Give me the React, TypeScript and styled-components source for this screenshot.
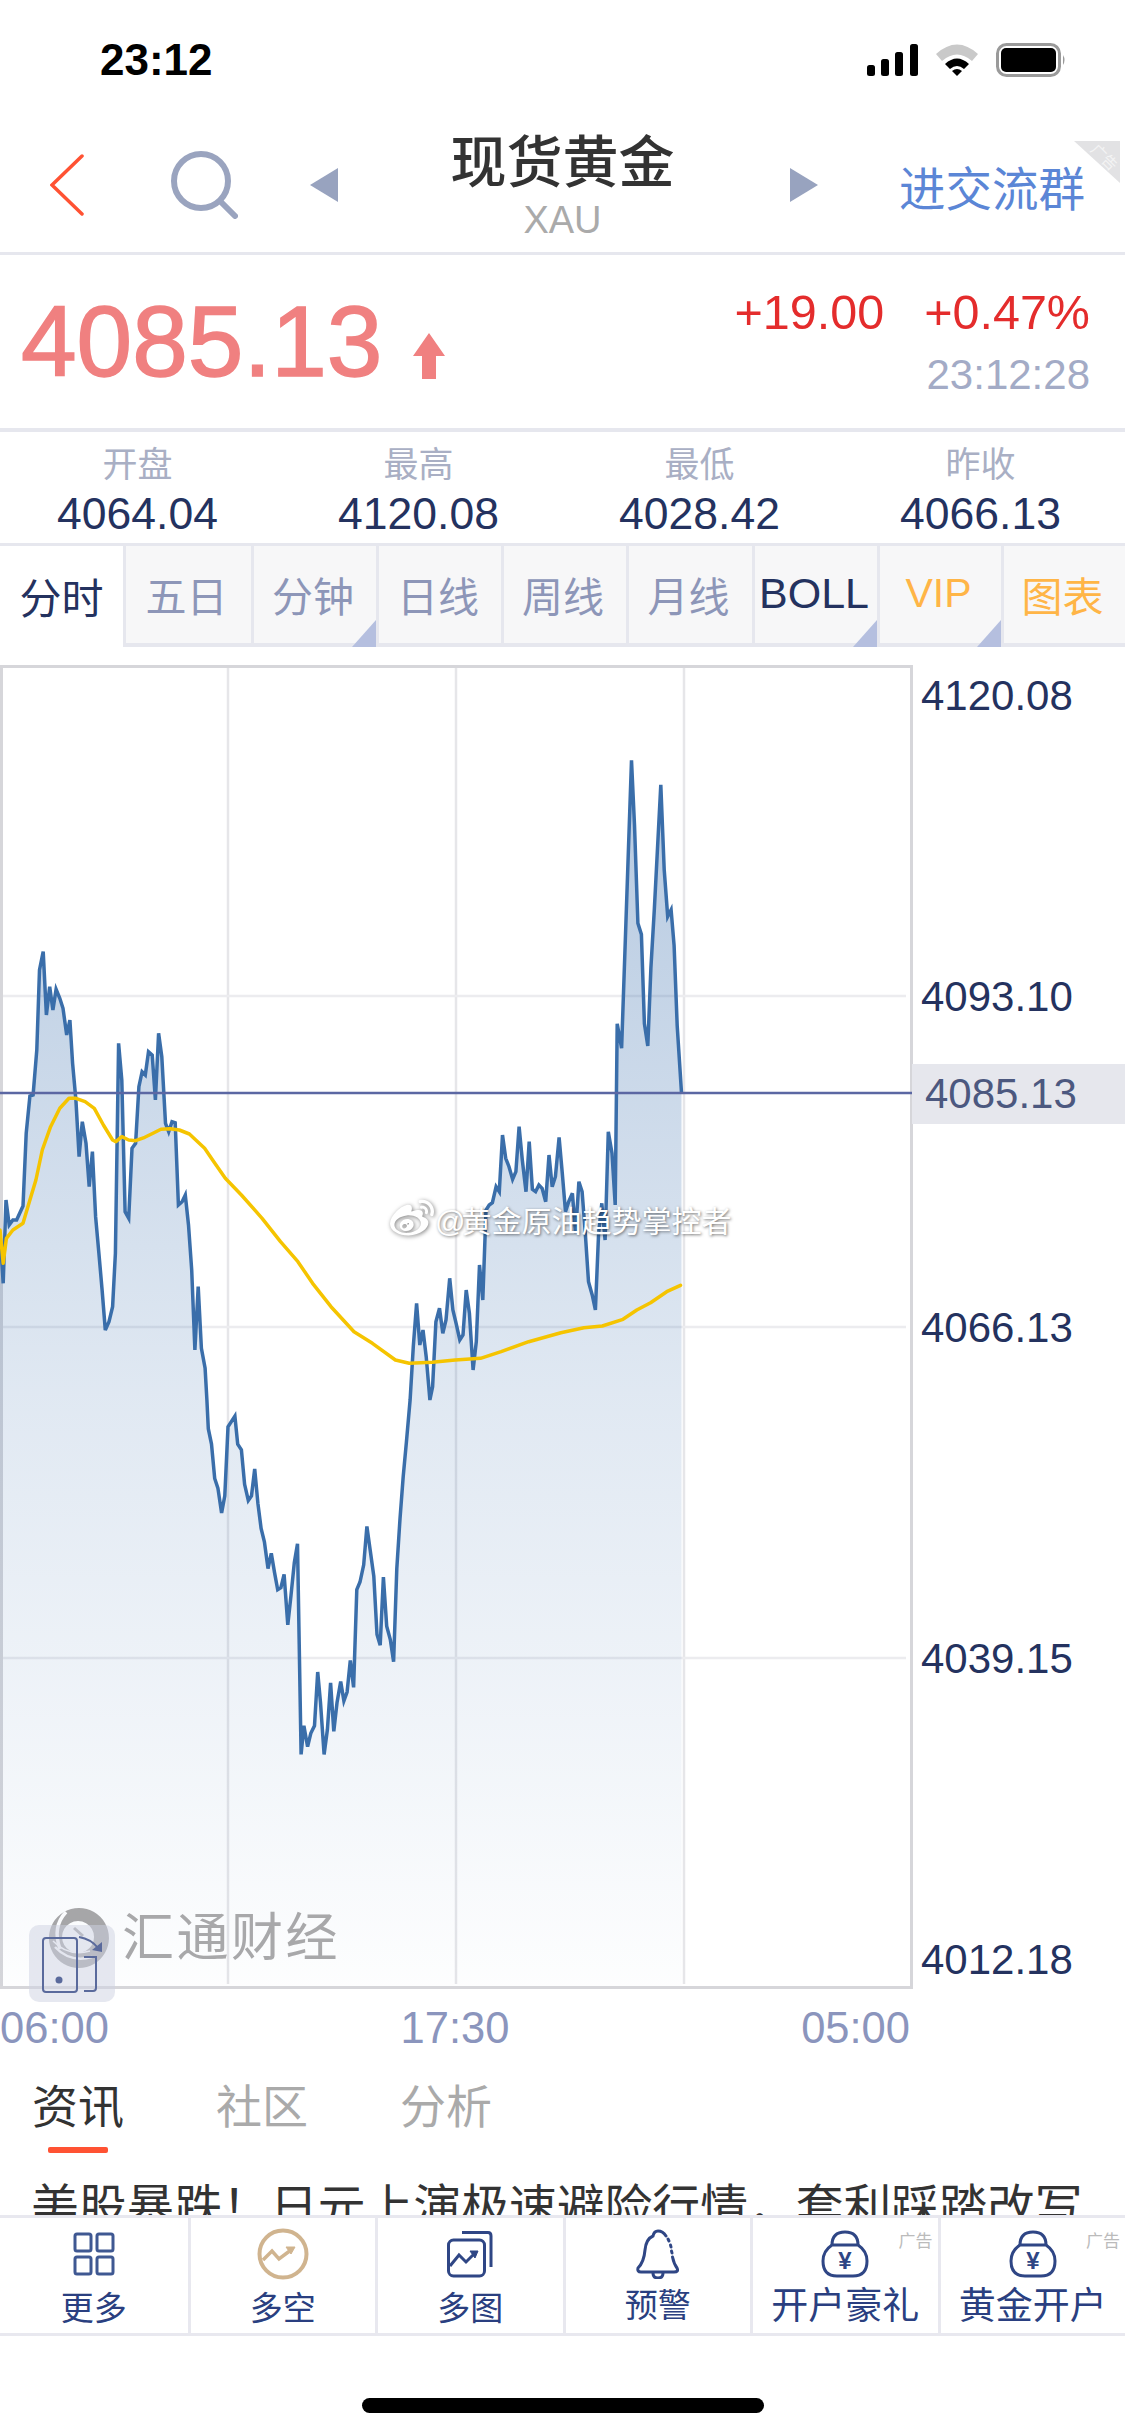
import styled, { createGlobalStyle } from "styled-components";
import { FaWeibo } from "react-icons/fa";

const GlobalStyle = createGlobalStyle`
  html, body {
    margin: 0;
    background: #fff;
    font-family: "Liberation Sans", "Noto Sans CJK SC", sans-serif;
  }
`;

const Page = styled.div`
  position: relative;
  width: 1125px;
  height: 2436px;
  overflow: hidden;
  background: #fff;
`;

const StatusBar = styled.div`
  height: 110px;
  display: flex;
  align-items: center;
  padding: 10px 59px 0 100px;
  box-sizing: border-box;
`;

const Clock = styled.div`
  flex: 1;
  font-size: 44px;
  font-weight: 700;
  color: #000;
`;

const StatusIcons = styled.div`
  display: flex;
  align-items: center;
  gap: 18px;
`;

const Nav = styled.div`
  position: relative;
  height: 145px;
  box-sizing: border-box;
  padding: 8px 0 0 50px;
  display: flex;
  align-items: center;
  border-bottom: 3px solid #e6e7ee;
`;

const SearchIcon = styled.svg`
  margin-left: 86px;
`;

const Arrow = styled.svg<{ $gap: number }>`
  margin-left: ${(p) => p.$gap}px;
`;

const TitleBlock = styled.div`
  width: 225px;
  margin: 3px 0 0 112px;
  text-align: center;
`;

const Title = styled.div`
  font-size: 56px;
  line-height: 66px;
  font-weight: 500;
  color: #333;
  white-space: nowrap;
`;

const Code = styled.div`
  margin-top: 1px;
  font-size: 38px;
  line-height: 46px;
  color: #aaa;
`;

const JoinLink = styled.div`
  margin-left: 81px;
  font-size: 46.5px;
  color: #5b86d6;
  white-space: nowrap;
`;

const AdCorner = styled.div`
  position: absolute;
  top: 31px;
  right: 5px;
  width: 46px;
  height: 42px;
  background: #e2e2e4;
  clip-path: polygon(0 0, 100% 0, 100% 100%);
`;

const AdCornerText = styled.span`
  position: absolute;
  top: 5px;
  right: 0;
  font-size: 15px;
  color: #f4f4f4;
  transform: rotate(45deg);
  white-space: nowrap;
`;

const Quote = styled.div`
  height: 177px;
  box-sizing: border-box;
  padding: 29px 35px 0 21px;
  display: flex;
  justify-content: space-between;
  border-bottom: 4px solid #e6e7ee;
`;

const PriceRow = styled.div`
  display: flex;
  align-items: flex-end;
  gap: 31px;
  padding-top: 7px;
  height: 100px;
`;

const Price = styled.div`
  font-size: 100px;
  line-height: 100px;
  color: #f08080;
  -webkit-text-stroke: 1.5px #f08080;
`;

const PriceArrow = styled.svg`
  margin-bottom: 12px;
`;

const QuoteRight = styled.div`
  text-align: right;
`;

const ChangeRow = styled.div`
  display: flex;
  justify-content: flex-end;
  gap: 40px;
  font-size: 48.5px;
  line-height: 56px;
  color: #e42c2c;
`;

const QuoteTime = styled.div`
  margin-top: 7px;
  font-size: 42px;
  line-height: 56px;
  color: #a3abc6;
`;

const Stats = styled.div`
  height: 111px;
  box-sizing: border-box;
  margin-left: -3px;
  padding-top: 11px;
  display: grid;
  grid-template-columns: repeat(4, 281px);
  text-align: center;
`;

const StatLabel = styled.div`
  font-size: 35px;
  line-height: 44px;
  color: #a9afc4;
`;

const StatValue = styled.div`
  font-size: 44.5px;
  line-height: 54px;
  color: #24325f;
`;

const Tabs = styled.div`
  display: grid;
  grid-template-columns: 123px 128px 125px 125px 125px 126px 125px 124px 124px;
  height: 104px;
  box-sizing: border-box;
  border-top: 3px solid #e6e7ee;
`;

const Tab = styled.div<{ $active?: boolean; $tone: string; $size: number }>`
  position: relative;
  display: flex;
  align-items: center;
  justify-content: center;
  box-sizing: border-box;
  padding: ${(p) => (p.$active ? "0 0 2px" : "0 4px 2px 0")};
  font-size: ${(p) => p.$size}px;
  color: ${(p) => p.$tone};
  white-space: nowrap;
  background: ${(p) => (p.$active ? "#fff" : "#f7f7f8")};
  border-left: ${(p) => (p.$active ? "none" : "3px solid #e6e7ee")};
  border-bottom: ${(p) => (p.$active ? "none" : "4px solid #e6e7ee")};
`;

const TabCorner = styled.i`
  position: absolute;
  right: 0;
  bottom: -4px;
  width: 24px;
  height: 27px;
  background: #b5bfdf;
  clip-path: polygon(100% 0, 100% 100%, 0 100%);
`;

const ChartRow = styled.div`
  display: flex;
  margin-top: 18px;
`;

const ChartFrame = styled.div`
  position: relative;
  flex: none;
  width: 913px;
  height: 1324px;
  box-sizing: border-box;
  border: 3px solid #d6d6da;
`;

const ChartSvg = styled.svg`
  display: block;
  overflow: visible;
`;

const AxisColumn = styled.div`
  position: relative;
  flex: 1;
  display: grid;
  grid-template-rows: 301px 331px 331px 301px 60px;
  padding: 1px 0 0 8px;
`;

const AxisLabel = styled.div`
  font-size: 42px;
  line-height: 60px;
  height: 60px;
  color: #24325f;
`;

const CurrentPrice = styled.div`
  position: absolute;
  top: 399px;
  left: -1px;
  right: 0;
  height: 60px;
  padding-left: 13px;
  font-size: 42px;
  line-height: 60px;
  color: #4c587f;
  background: #e6e7ed;
`;

const BrandMark = styled.div`
  position: absolute;
  left: 45px;
  bottom: 17px;
  display: flex;
  align-items: center;
  gap: 12px;
`;

const BrandName = styled.span`
  font-size: 52px;
  line-height: 62px;
  letter-spacing: 2.5px;
  color: #a8a8aa;
`;

const RotateButton = styled.div`
  position: absolute;
  left: 26px;
  bottom: -16px;
  width: 86px;
  height: 77px;
  border-radius: 10px;
  background: rgba(205, 210, 226, 0.5);
`;

const TimeAxis = styled.div`
  width: 910px;
  height: 76px;
  display: flex;
  align-items: center;
  justify-content: space-between;
  font-size: 43.5px;
  color: #8b95bd;
`;

const NewsTabs = styled.div`
  display: flex;
  gap: 92px;
  height: 87px;
  padding: 16px 0 0 32px;
  box-sizing: border-box;
`;

const NewsTab = styled.div<{ $active?: boolean }>`
  position: relative;
  font-size: 46px;
  line-height: 50px;
  color: ${(p) => (p.$active ? "#333" : "#aaa")};

  ${(p) =>
    p.$active &&
    `&::after {
      content: "";
      position: absolute;
      left: 16px;
      top: 65px;
      width: 60px;
      height: 6px;
      border-radius: 2px;
      background: #ff5233;
    }`}
`;

const Headline = styled.div`
  height: 62px;
  overflow: hidden;
  padding: 25px 0 0 31px;
  box-sizing: border-box;
  font-size: 47.8px;
  line-height: 60px;
  color: #333;
  white-space: nowrap;
`;

const BottomBar = styled.div`
  display: grid;
  grid-template-columns: repeat(6, 1fr);
  height: 121px;
  box-sizing: border-box;
  border-top: 3px solid #e8e8ef;
  border-bottom: 3px solid #e8e8ef;
  background: #fff;
`;

const BarCell = styled.div`
  position: relative;
  display: flex;
  flex-direction: column;
  align-items: center;
  padding-top: 10px;
  box-sizing: border-box;
  border-left: 3px solid #e8e8ef;

  &:first-child {
    border-left: none;
  }
`;

const BarIcon = styled.div`
  height: 52px;
  display: flex;
  align-items: center;
  justify-content: center;
`;

const BarLabel = styled.div<{ $wide?: boolean; $lift?: boolean }>`
  font-size: ${(p) => (p.$wide ? "37px" : "33px")};
  line-height: 48px;
  margin-top: ${(p) => (p.$wide ? "3px" : p.$lift ? "2px" : "5px")};
  color: #2a3f80;
  white-space: nowrap;
`;

const AdTag = styled.span`
  position: absolute;
  top: 9px;
  right: 5px;
  font-size: 17px;
  color: #bbb;
`;

const HomeIndicator = styled.div`
  width: 402px;
  height: 15px;
  margin: 62px auto 0;
  border-radius: 8px;
  background: #000;
`;

const Watermark = styled.div`
  position: absolute;
  left: 390px;
  top: 1197px;
  display: flex;
  align-items: center;
  gap: 1px;
  font-size: 30px;
  color: #fff;
  text-shadow: 1px 1px 3px rgba(0, 0, 0, 0.55);
  white-space: nowrap;

  svg {
    filter: drop-shadow(1px 1px 2px rgba(0, 0, 0, 0.5));
  }
`;

const WatermarkAt = styled.span`
  letter-spacing: -4px;
`;

type Pts = number[][];

// traced from zoomed crops, scaled back to page pixels
const toPage = (pts: Pts, sx: number, ox: number, sy: number, oy: number) =>
  pts.map(([x, y]) => [ox + x / sx, oy + y / sy]);

const blueA: Pts = [
  [0, 1000], [7, 1150], [13, 900], [20, 975], [28, 960], [36, 960], [50, 918], [57, 700], [65, 588], [72, 585],
  [80, 450], [86, 210], [94, 155], [101, 345], [108, 260], [115, 330], [122, 268], [130, 295], [137, 325], [145, 405],
  [152, 360], [158, 490], [165, 600], [172, 770], [179, 665], [187, 730], [194, 860], [201, 755], [208, 950], [215, 1060],
  [222, 1170], [229, 1290], [237, 1265], [245, 1220], [251, 1060], [258, 430], [265, 540], [272, 935], [280, 955], [287, 745],
  [295, 730], [302, 560], [309, 515], [316, 525], [323, 455], [331, 465], [338, 600], [345, 400], [352, 470], [360, 670],
  [367, 695], [374, 665], [381, 668], [388, 915], [396, 905], [403, 885], [410, 975], [417, 1110], [424, 1350], [431, 1160],
  [438, 1345], [446, 1405],
];
const blueB: Pts = [
  [450, 0], [453, 75], [460, 115], [467, 205], [474, 230], [482, 295], [489, 250], [496, 70], [511, 42], [517, 115],
  [525, 130], [532, 220], [540, 262], [547, 250], [554, 180], [561, 270], [568, 335], [575, 370], [583, 440], [590, 400],
  [597, 450], [604, 495], [611, 490], [618, 455], [626, 587], [633, 510], [640, 425], [647, 375], [655, 925], [661, 850],
  [669, 905], [676, 870], [684, 850], [691, 710], [697, 790], [705, 925], [712, 860], [719, 738], [726, 865], [733, 790],
  [741, 735], [748, 785], [755, 762], [762, 680], [769, 750], [776, 495], [783, 475], [791, 430], [798, 330], [805, 390],
  [813, 460], [820, 612], [827, 640], [834, 462], [841, 590], [849, 625], [856, 683], [863, 440], [870, 310], [877, 200],
  [884, 110], [892, 0],
];
const blueC: Pts = [
  [899, 1340], [906, 1210], [913, 1335], [920, 1290], [927, 1370], [935, 1500], [941, 1460], [948, 1265], [956, 1225], [963, 1300],
  [970, 1260], [978, 1135], [985, 1230], [992, 1270], [1000, 1320], [1007, 1305], [1014, 1170], [1021, 1240], [1029, 1410], [1036, 1325],
  [1043, 1095], [1050, 1200], [1057, 930], [1064, 915], [1071, 908], [1079, 860], [1086, 875], [1093, 705], [1100, 775], [1107, 800],
  [1115, 838], [1122, 815], [1129, 680], [1136, 780], [1144, 875], [1151, 725], [1158, 868], [1165, 875], [1172, 855], [1179, 865],
  [1187, 905], [1194, 765], [1201, 860], [1208, 830], [1216, 712], [1223, 820], [1230, 935], [1237, 905], [1245, 880], [1252, 1000],
  [1259, 845], [1266, 875], [1273, 1000], [1280, 1145], [1288, 1185], [1295, 1230], [1302, 1000], [1309, 910], [1316, 1020], [1323, 695],
  [1331, 760], [1338, 915],
];
const blueD: Pts = [
  [388, 725], [398, 780], [408, 500], [421, 135], [428, 280], [436, 500], [444, 525], [451, 725], [459, 775], [466, 600],
  [474, 470], [489, 190], [497, 380], [505, 485], [513, 470], [520, 550], [527, 730], [537, 880],
];
const yellow: Pts = [
  [0, 990], [7, 1090], [14, 1015], [28, 990], [50, 970], [65, 900], [78, 840], [92, 750], [110, 680], [130, 625],
  [150, 595], [165, 595], [185, 605], [205, 625], [225, 675], [245, 720], [252, 725], [265, 710], [280, 720], [295, 722],
  [315, 712], [335, 698], [350, 688], [370, 686], [390, 690], [412, 702], [445, 745], [465, 785], [490, 835], [525, 885],
  [570, 955], [610, 1025], [648, 1085], [680, 1150], [720, 1220], [770, 1295], [810, 1330], [860, 1380], [890, 1390], [940, 1387],
  [990, 1380], [1045, 1375], [1090, 1355], [1150, 1325], [1220, 1298], [1270, 1283], [1310, 1278], [1355, 1258], [1385, 1230], [1415, 1208],
  [1450, 1175], [1480, 1156],
];

const linePts = [
  ...toPage(blueA, 2.175, 0, 3, 900),
  ...toPage(blueB, 2.175, 0, 2.61, 1400),
  ...toPage(blueC, 2.175, 0, 3, 900),
  ...toPage(blueD, 2.32, 450, 2.24, 700),
];
const toPath = (pts: Pts) => pts.map(([x, y], i) => `${i ? "L" : "M"}${x.toFixed(1)} ${y.toFixed(1)}`).join(" ");
const bluePath = toPath(linePts);
const areaPath = `${bluePath} L681.5 1986 L0 1986 Z`;
const yellowPath = toPath(toPage(yellow, 2.175, 0, 3, 900));

const stats = [
  { label: "开盘", value: "4064.04" },
  { label: "最高", value: "4120.08" },
  { label: "最低", value: "4028.42" },
  { label: "昨收", value: "4066.13" },
];

const NAVY = "#24325f";
const MUTED = "#8d96b8";
const ORANGE = "#ffb547";

const tabs = [
  { name: "分时", tone: NAVY, active: true, size: 42 },
  { name: "五日", tone: MUTED, size: 41 },
  { name: "分钟", tone: MUTED, corner: true, size: 41 },
  { name: "日线", tone: MUTED, size: 41 },
  { name: "周线", tone: MUTED, size: 41 },
  { name: "月线", tone: MUTED, size: 41 },
  { name: "BOLL", tone: NAVY, corner: true, size: 43 },
  { name: "VIP", tone: ORANGE, corner: true, size: 41 },
  { name: "图表", tone: ORANGE, size: 41 },
];

const ICON = "#2f4685";

const MoreIcon = () => (
  <svg width="42" height="44" viewBox="0 0 42 44" fill="none" stroke="#3f5892" strokeWidth="3">
    <rect x="2" y="2" width="16" height="17" rx="2" />
    <rect x="24" y="2" width="16" height="17" rx="2" />
    <rect x="2" y="25" width="16" height="17" rx="2" />
    <rect x="24" y="25" width="16" height="17" rx="2" />
  </svg>
);

const LongShortIcon = () => (
  <svg width="52" height="52" viewBox="0 0 52 52" fill="none" stroke="#d0b48f">
    <circle cx="26" cy="26" r="23.5" strokeWidth="4" />
    <path d="M6 32 L15 23 L22 31 L34 22" strokeWidth="3.5" />
    <path d="M29 19 H38 L34 26 Z" fill="#d0b48f" strokeWidth="1" />
  </svg>
);

const MultiChartIcon = () => (
  <svg width="46" height="48" viewBox="0 0 46 48" fill="none" stroke={ICON} strokeWidth="3">
    <rect x="1.5" y="10" width="36" height="36" rx="5" />
    <path d="M15 2.5 H41 Q44 2.5 44 6 V37" />
    <path d="M3 36 L12 25 L19 32 L28 23" />
    <path d="M23 21 H31 L28 28 Z" fill={ICON} strokeWidth="1" />
  </svg>
);

const BellIcon = () => (
  <svg width="44" height="50" viewBox="0 0 44 50" fill="none" stroke={ICON} strokeWidth="3">
    <path d="M30 7 Q27 2 22 2 Q18 2 17 7 Q10 10 9 21 Q8 33 2 39 Q1 43 5 43 H38 Q43 43 41 39 Q38 35 36.5 28" strokeLinecap="round" />
    <path d="M32 10 L33 12 M34.5 16 L35 18 M35.5 22 L36 24" strokeLinecap="round" />
    <path d="M17 44 Q17 49 22 49 Q27 49 27 44" />
  </svg>
);

const BagIcon = () => (
  <svg width="48" height="48" viewBox="0 0 48 48" fill="none" stroke={ICON} strokeWidth="3">
    <path d="M11 15 Q11 2 24 2 Q37 2 37 15" />
    <path d="M11 15 H37 Q46 21 46 31 Q46 46 32 46 H16 Q2 46 2 31 Q2 21 11 15 Z" />
    <text x="24" y="39" textAnchor="middle" fontSize="24" fontWeight="700" fill={ICON} stroke="none" fontFamily="Liberation Sans">¥</text>
  </svg>
);

const barItems = [
  { label: "更多", icon: <MoreIcon /> },
  { label: "多空", icon: <LongShortIcon /> },
  { label: "多图", icon: <MultiChartIcon /> },
  { label: "预警", icon: <BellIcon />, lift: true },
  { label: "开户豪礼", icon: <BagIcon />, ad: true },
  { label: "黄金开户", icon: <BagIcon />, ad: true },
];

export default function App() {
  return (
    <Page>
      <GlobalStyle />
      <StatusBar>
        <Clock>23:12</Clock>
        <StatusIcons>
          <svg width="51" height="32" viewBox="0 0 51 32">
            <rect x="0" y="21" width="8" height="11" rx="2.5" />
            <rect x="14" y="15" width="8" height="17" rx="2.5" />
            <rect x="28" y="8" width="8" height="24" rx="2.5" />
            <rect x="43" y="0" width="8" height="32" rx="2.5" />
          </svg>
          <svg width="42" height="32" viewBox="0 0 42 32">
            <path d="M0 10 Q21 -9 42 10 L36 17 Q21 4 6 17 Z" fill="#c9c9c9" />
            <path d="M9 20 Q21 9 33 20 L28 25 Q21 19 14 25 Z" fill="#000" />
            <path d="M16 27 Q21 23 26 27 L21 32 Z" fill="#000" />
          </svg>
          <svg width="70" height="34" viewBox="0 0 70 34">
            <rect x="1.5" y="1.5" width="62" height="31" rx="9" fill="none" stroke="#9a9a9a" strokeWidth="3" />
            <rect x="5" y="5" width="55" height="24" rx="5" fill="#000" />
            <path d="M67 12 Q70 17 67 22 Z" fill="#9a9a9a" />
          </svg>
        </StatusIcons>
      </StatusBar>

      <Nav>
        <svg width="34" height="62" viewBox="0 0 34 62" fill="none" stroke="#ff5233" strokeWidth="3.5" strokeLinecap="round">
          <path d="M32 2 L2 31 L32 60" />
        </svg>
        <SearchIcon width="68" height="68" viewBox="0 0 68 68" fill="none" stroke="#9aa4bf" strokeWidth="6" strokeLinecap="round">
          <circle cx="31" cy="30" r="27" />
          <path d="M50 50 L65 65" />
        </SearchIcon>
        <Arrow $gap={72} width="28" height="34" viewBox="0 0 28 34">
          <path d="M28 0 V34 L0 17 Z" fill="#98a3bf" />
        </Arrow>
        <TitleBlock>
          <Title>现货黄金</Title>
          <Code>XAU</Code>
        </TitleBlock>
        <Arrow $gap={115} width="28" height="34" viewBox="0 0 28 34">
          <path d="M0 0 V34 L28 17 Z" fill="#98a3bf" />
        </Arrow>
        <JoinLink>进交流群</JoinLink>
        <AdCorner>
          <AdCornerText>广告</AdCornerText>
        </AdCorner>
      </Nav>

      <Quote>
        <PriceRow>
          <Price>4085.13</Price>
          <PriceArrow width="32" height="46" viewBox="0 0 32 46">
            <path d="M16 0 L32 23 H23 V46 H9 V23 H0 Z" fill="#f08080" />
          </PriceArrow>
        </PriceRow>
        <QuoteRight>
          <ChangeRow>
            <span>+19.00</span>
            <span>+0.47%</span>
          </ChangeRow>
          <QuoteTime>23:12:28</QuoteTime>
        </QuoteRight>
      </Quote>

      <Stats>
        {stats.map((s) => (
          <div key={s.label}>
            <StatLabel>{s.label}</StatLabel>
            <StatValue>{s.value}</StatValue>
          </div>
        ))}
      </Stats>

      <Tabs>
        {tabs.map((t) => (
          <Tab key={t.name} $active={t.active} $tone={t.tone} $size={t.size}>
            {t.name}
            {t.corner && <TabCorner />}
          </Tab>
        ))}
      </Tabs>

      <ChartRow>
        <ChartFrame>
          <ChartSvg width="907" height="1318" viewBox="3 668 907 1318">
            <defs>
              <linearGradient id="area" gradientUnits="userSpaceOnUse" x1="0" y1="760" x2="0" y2="1986">
                <stop offset="0" stopColor="#3269aa" stopOpacity="0.36" />
                <stop offset="0.52" stopColor="#3269aa" stopOpacity="0.15" />
                <stop offset="1" stopColor="#3269aa" stopOpacity="0.01" />
              </linearGradient>
            </defs>
            {[228, 456, 684].map((x) => (
              <line key={x} x1={x} y1={668} x2={x} y2={1984} stroke="#e6e6e9" strokeWidth="2.5" />
            ))}
            {[996, 1327, 1658].map((y) => (
              <line key={y} x1={3} y1={y} x2={906} y2={y} stroke="#ececef" strokeWidth="2.5" />
            ))}
            <path d={areaPath} fill="url(#area)" />
            <path d={bluePath} fill="none" stroke="#3a6eaa" strokeWidth="3.5" />
            <line x1={0} y1={1093} x2={912} y2={1093} stroke="#5b67a3" strokeWidth="2.5" />
            <path d={yellowPath} fill="none" stroke="#f5c400" strokeWidth="3.5" strokeLinecap="round" strokeLinejoin="round" />
          </ChartSvg>
          <BrandMark>
            <svg width="62" height="62" viewBox="0 0 62 62">
              <path
                fillRule="evenodd"
                fill="#a6a6a8"
                d="M31 1 A30 30 0 1 1 30.9 1 Z M30 14 A16 16 0 1 0 30.1 14 Z"
              />
              <path d="M18 5 Q4 20 12 42" fill="none" stroke="#fafbfd" strokeWidth="3.5" />
              <path d="M7 40 Q22 56 44 50" fill="none" stroke="#fafbfd" strokeWidth="2.5" />
              <path d="M5 34 Q20 50 42 44" fill="none" stroke="#fafbfd" strokeWidth="1.5" />
              <path d="M26 21 L35 29" fill="none" stroke="#a6a6a8" strokeWidth="3" />
            </svg>
            <BrandName>汇通财经</BrandName>
          </BrandMark>
          <RotateButton>
            <svg width="86" height="77" viewBox="0 0 86 77" fill="none" stroke="#5a6a9c" strokeWidth="2">
              <rect x="14" y="13" width="34" height="54" rx="3" />
              <circle cx="30" cy="55" r="3.5" fill="#5a6a9c" stroke="none" />
              <path d="M55 32 H67 V63 Q67 66 64 66 H55" />
              <path d="M50 12 Q62 14 69 23" />
              <path d="M63 25 L73 17 L73 27 Z" fill="#5a6a9c" stroke="none" />
            </svg>
          </RotateButton>
        </ChartFrame>
        <AxisColumn>
          <AxisLabel>4120.08</AxisLabel>
          <AxisLabel>4093.10</AxisLabel>
          <AxisLabel>4066.13</AxisLabel>
          <AxisLabel>4039.15</AxisLabel>
          <AxisLabel>4012.18</AxisLabel>
          <CurrentPrice>4085.13</CurrentPrice>
        </AxisColumn>
      </ChartRow>

      <TimeAxis>
        <span>06:00</span>
        <span>17:30</span>
        <span>05:00</span>
      </TimeAxis>

      <NewsTabs>
        <NewsTab $active>资讯</NewsTab>
        <NewsTab>社区</NewsTab>
        <NewsTab>分析</NewsTab>
      </NewsTabs>

      <Headline>美股暴跌！日元上演极速避险行情，套利踩踏改写</Headline>

      <BottomBar>
        {barItems.map((item) => (
          <BarCell key={item.label}>
            {item.ad && <AdTag>广告</AdTag>}
            <BarIcon>{item.icon}</BarIcon>
            <BarLabel $wide={item.ad} $lift={item.lift}>{item.label}</BarLabel>
          </BarCell>
        ))}
      </BottomBar>

      <HomeIndicator />

      <Watermark>
        <FaWeibo size={44} />
        <span>
          <WatermarkAt>@</WatermarkAt>黄金原油趋势掌控者
        </span>
      </Watermark>
    </Page>
  );
}
